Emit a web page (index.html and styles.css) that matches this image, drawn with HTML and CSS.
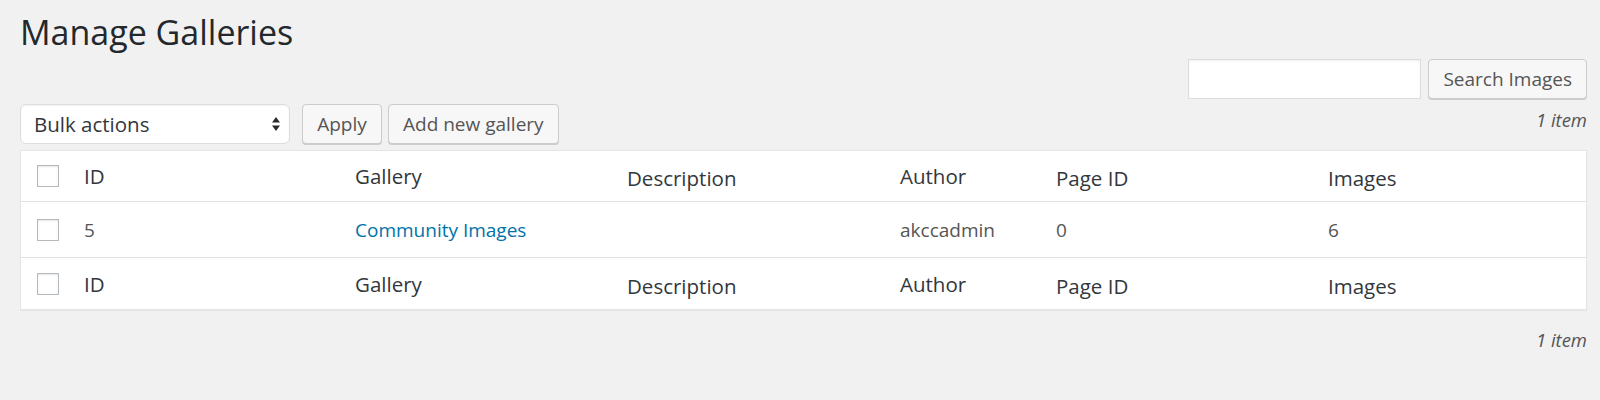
FILE: index.html
```html
<!DOCTYPE html>
<html lang="en">
<head>
<meta charset="utf-8">
<title>Manage Galleries</title>
<link rel="stylesheet" href="styles.css">
</head>
<body>
<div class="wrap">
  <h1 class="page-title">Manage Galleries</h1>

  <form class="search-box">
    <input class="search-input" type="search" aria-label="Search">
    <button class="button" type="button">Search Images</button>
  </form>

  <div class="tablenav">
    <div class="tablenav-actions">
      <div class="select">
        <span class="select-label">Bulk actions</span>
        <svg class="select-arrows" width="10" height="16" viewBox="0 0 10 16" aria-hidden="true">
          <path d="M1 6.5 L5 1 L9 6.5 Z" fill="#2b2b2b"/>
          <path d="M1 9.5 L5 15 L9 9.5 Z" fill="#2b2b2b"/>
        </svg>
      </div>
      <button class="button button--apply" type="button">Apply</button>
      <button class="button" type="button">Add new gallery</button>
    </div>
    <span class="displaying-num">1 item</span>
  </div>

  <div class="list-table">
    <div class="row row--head">
      <div class="cell cell--cb"><span class="checkbox"></span></div>
      <div class="cell cell--th">ID</div>
      <div class="cell cell--th">Gallery</div>
      <div class="cell cell--th cell--low">Description</div>
      <div class="cell cell--th">Author</div>
      <div class="cell cell--th cell--low">Page ID</div>
      <div class="cell cell--th cell--low">Images</div>
    </div>
    <div class="row row--item">
      <div class="cell cell--cb"><span class="checkbox"></span></div>
      <div class="cell">5</div>
      <div class="cell"><a class="row-link" href="#">Community Images</a></div>
      <div class="cell"></div>
      <div class="cell">akccadmin</div>
      <div class="cell">0</div>
      <div class="cell">6</div>
    </div>
    <div class="row row--foot">
      <div class="cell cell--cb"><span class="checkbox"></span></div>
      <div class="cell cell--th">ID</div>
      <div class="cell cell--th">Gallery</div>
      <div class="cell cell--th cell--low">Description</div>
      <div class="cell cell--th">Author</div>
      <div class="cell cell--th cell--low">Page ID</div>
      <div class="cell cell--th cell--low">Images</div>
    </div>
  </div>

  <div class="tablenav tablenav--bottom">
    <span class="displaying-num">1 item</span>
  </div>
</div>
</body>
</html>
```

FILE: styles.css
```css
* {
  box-sizing: border-box;
}

html,
body {
  margin: 0;
  padding: 0;
  background: #f1f1f1;
}

body {
  font-family: "Open Sans", "Liberation Sans", sans-serif;
  font-size: 19px;
  color: #32373c;
}

.wrap {
  padding: 0 13px 0 20px;
}

.page-title {
  margin: 11px 0 0 0;
  font-size: 34px;
  font-weight: 400;
  line-height: 43px;
  color: #23282d;
}

.search-box {
  display: flex;
  justify-content: flex-end;
  gap: 7px;
  margin: 5px 0 0 0;
  height: 40px;
}

.search-input {
  width: 233px;
  height: 40px;
  margin: 0;
  border: 1px solid #dddddd;
  background: #ffffff;
  box-shadow: inset 0 1px 2px rgba(0, 0, 0, 0.07);
  border-radius: 0;
  outline: none;
}

.button {
  height: 40px;
  margin: 0;
  padding: 0 14px;
  font-family: inherit;
  font-size: 19px;
  color: #555555;
  background: #f7f7f7;
  border: 1px solid #cccccc;
  border-radius: 4px;
  box-shadow: 0 1px 0 #cccccc;
  cursor: pointer;
  white-space: nowrap;
}

.tablenav {
  display: flex;
  justify-content: space-between;
  align-items: flex-start;
  margin-top: 5px;
  height: 40px;
}

.tablenav-actions {
  display: flex;
  align-items: flex-start;
  gap: 6px;
}

.select {
  display: flex;
  align-items: center;
  justify-content: space-between;
  width: 270px;
  height: 40px;
  padding: 0 8px 0 13px;
  background: #ffffff;
  border: 1px solid #dddddd;
  border-radius: 6px;
  box-shadow: inset 0 1px 2px rgba(0, 0, 0, 0.05);
  color: #32373c;
  font-size: 20.5px;
}

.select-arrows {
  display: block;
}

.button--apply {
  margin-left: 6px;
  width: 80px;
  padding: 0;
}

.displaying-num {
  display: block;
  margin-top: 6px;
  line-height: 20px;
  font-size: 18.5px;
  font-style: italic;
  color: #555555;
}

.list-table {
  margin-top: 6px;
  background: #ffffff;
  border: 1px solid #e5e5e5;
  box-shadow: 0 1px 1px rgba(0, 0, 0, 0.04);
}

.row {
  display: grid;
  grid-template-columns: 49px 271px 272px 273px 156px 272px 1fr;
  align-items: center;
}

.row--head {
  height: 51px;
  border-bottom: 1px solid #e1e1e1;
}

.row--item {
  height: 55px;
}

.row--foot {
  height: 52px;
  border-top: 1px solid #e1e1e1;
}

.cell {
  padding-left: 14px;
  font-size: 19px;
  line-height: 24px;
  color: #555555;
  white-space: nowrap;
}

.cell--th {
  font-size: 20.5px;
  color: #32373c;
}

.cell--low {
  padding-top: 4px;
}

.cell--cb {
  padding-left: 16px;
  display: flex;
  align-items: center;
}

.checkbox {
  display: block;
  width: 22px;
  height: 22px;
  background: #ffffff;
  border: 1px solid #b4b9be;
  box-shadow: inset 0 1px 2px rgba(0, 0, 0, 0.1);
}

.row-link {
  color: #0073aa;
  text-decoration: none;
}

.tablenav--bottom {
  justify-content: flex-end;
  margin-top: 14px;
}
```
